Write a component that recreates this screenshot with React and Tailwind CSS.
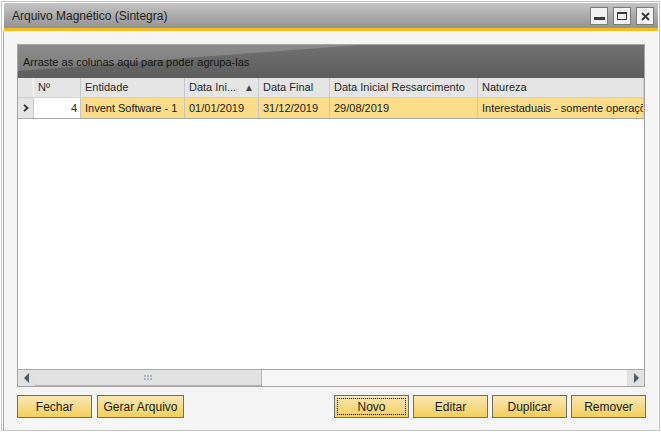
import React from 'react'

const FONT = { fontFamily: '"Liberation Sans", Arial, sans-serif' }

const COLS = [
  { key: 'num', label: 'Nº', w: 'w-[47px]' },
  { key: 'ent', label: 'Entidade', w: 'w-[104px]' },
  { key: 'ini', label: 'Data Ini...', w: 'w-[74px]', sort: true },
  { key: 'fim', label: 'Data Final', w: 'w-[71px]' },
  { key: 'res', label: 'Data Inicial Ressarcimento', w: 'w-[148px]' },
  { key: 'nat', label: 'Natureza', w: 'flex-1' },
]

const ROW = {
  num: '4',
  ent: 'Invent Software - 1',
  ini: '01/01/2019',
  fim: '31/12/2019',
  res: '29/08/2019',
  nat: 'Interestaduais - somente operações sujeitas ao regime',
}

function TitleButton({ children }) {
  return (
    <div className="w-[18px] h-[18px] border border-[#7a7a7a] bg-[#f2f2f2] flex items-center justify-center">
      {children}
    </div>
  )
}

function Button({ children, w = 'w-[75px]', focused }) {
  return (
    <button
      className={`${w} h-[23px] border border-[#6e6e6e] bg-[linear-gradient(to_bottom,#f9e8b4,#f2cf5c)] text-[12px] text-[#1b1b1b] relative flex items-center justify-center`}
    >
      {focused && <span className="absolute inset-[2px] border border-dotted border-black" />}
      {children}
    </button>
  )
}

export default function App() {
  return (
    <div className="w-[661px] h-[432px] bg-white p-[1px]" style={FONT}>
      <div className="h-full border border-[#c4c4c4] pt-[1px] pl-[1px] pr-[1px] pb-0 flex flex-col">
        {/* title bar */}
        <div className="h-[25px] ml-[1px] bg-[linear-gradient(to_bottom,#c4c4c4,#939393)] flex items-center justify-between pl-[8px] pr-[4px]">
          <span className="text-[12px] text-[#1e1e1e] pt-[1px]">Arquivo Magnético (Sintegra)</span>
          <div className="flex gap-[5px] pt-[1px]">
            <TitleButton>
              <span className="block w-[11px] h-[3px] bg-[#3c3c3c] mt-[4px]" />
            </TitleButton>
            <TitleButton>
              <span className="block w-[10px] h-[8px] border border-[#3c3c3c] border-t-2" />
            </TitleButton>
            <TitleButton>
              <svg width="9" height="9" viewBox="0 0 9 9">
                <path d="M1 1 L8 8 M8 1 L1 8" stroke="#3c3c3c" strokeWidth="2" />
              </svg>
            </TitleButton>
          </div>
        </div>
        <div className="h-[3px] ml-[1px] bg-[#f8bd1c]" />

        {/* body */}
        <div className="flex-1 border-l border-[#a9a9a9] bg-[#f5f5f5] flex flex-col pt-[13px] pb-[11px]">
          <div className="mx-[13px] h-[343px] border border-[#a3a3a3] bg-white flex flex-col">
            {/* group panel */}
            <div className="h-[33px] relative bg-[linear-gradient(to_bottom,#717171,#5d5d5d)] flex items-center pl-[5px] pt-[2px]">
              <div className="absolute inset-0 bg-[linear-gradient(to_bottom,#8c8c8c,#777777)] [clip-path:polygon(0_0,340px_0,0_26px)]" />
              <span className="relative text-[11px] text-[#141414]">Arraste as colunas aqui para poder agrupa-las</span>
            </div>
            {/* header */}
            <div className="h-[20px] flex bg-[#e5e5e5] border-b border-[#d0d0d0] text-[11px] text-[#2a2a2a]">
              <div className="w-[16px] border-r border-[#fafafa]" />
              {COLS.map((c) => (
                <div
                  key={c.key}
                  className={`${c.w} border-r border-[#c9c9c9] flex items-center pl-[4px] pr-[4px] whitespace-nowrap overflow-hidden`}
                >
                  <span className="flex-1">{c.label}</span>
                  {c.sort && <span className="text-[10px] text-[#444]">▲</span>}
                </div>
              ))}
            </div>
            {/* data row */}
            <div className="h-[21px] flex border-b border-[#a9a9a9] text-[11px] text-[#1a1a1a]">
              <div className="w-[16px] bg-[#e5e5e5] border-r border-[#c9c9c9] flex items-center justify-center">
                <svg width="6" height="8" viewBox="0 0 6 8">
                  <path d="M1 0.8 L4.5 4 L1 7.2" fill="none" stroke="#2e2e2e" strokeWidth="1.8" />
                </svg>
              </div>
              {COLS.map((c) => (
                <div
                  key={c.key}
                  className={`${c.w} border-r border-[#c3c3c3] flex items-center whitespace-nowrap overflow-hidden ${
                    c.key === 'num' ? 'bg-white justify-end pr-[3px]' : 'bg-[#fbdc88] pl-[4px]'
                  }`}
                >
                  {ROW[c.key]}
                </div>
              ))}
            </div>
            <div className="flex-1" />
            {/* horizontal scrollbar */}
            <div className="h-[17px] border-t border-[#a9a9a9] flex bg-[#f6f6f6]">
              <div className="w-[17px] bg-[#e1e1e1] flex items-center justify-center">
                <svg width="6" height="10" viewBox="0 0 6 10">
                  <path d="M5 0 L0 5 L5 10 Z" fill="#4c5a66" />
                </svg>
              </div>
              <div className="w-[227px] bg-[#e2e2e2] border-b border-[#b4b4b4] border-r flex items-center justify-center">
                <svg width="9" height="6" viewBox="0 0 9 6">
                  <g fill="#a9b3bd">
                    <rect x="0" y="0" width="2" height="2" />
                    <rect x="3" y="0" width="2" height="2" />
                    <rect x="6" y="0" width="2" height="2" />
                    <rect x="0" y="3" width="2" height="2" />
                    <rect x="3" y="3" width="2" height="2" />
                    <rect x="6" y="3" width="2" height="2" />
                  </g>
                </svg>
              </div>
              <div className="flex-1" />
              <div className="w-[17px] bg-[#e1e1e1] flex items-center justify-center">
                <svg width="6" height="10" viewBox="0 0 6 10">
                  <path d="M1 0 L6 5 L1 10 Z" fill="#4c5a66" />
                </svg>
              </div>
            </div>
          </div>

          {/* footer buttons */}
          <div className="flex justify-between mt-[8px] pl-[13px] pr-[12px]">
            <div className="flex gap-[5px]">
              <Button>Fechar</Button>
              <Button w="w-[87px]">Gerar Arquivo</Button>
            </div>
            <div className="flex gap-[4px]">
              <Button focused>Novo</Button>
              <Button>Editar</Button>
              <Button>Duplicar</Button>
              <Button>Remover</Button>
            </div>
          </div>
        </div>
      </div>
    </div>
  )
}
